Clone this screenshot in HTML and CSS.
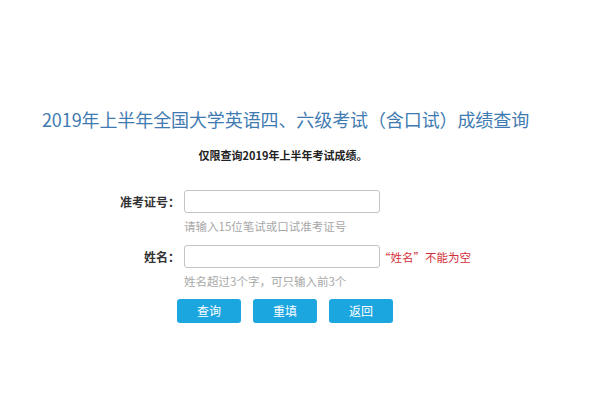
FILE: index.html
```html
<!DOCTYPE html>
<html lang="zh-CN">
<head>
<meta charset="utf-8">
<title>成绩查询</title>
<link rel="stylesheet" href="styles.css">
</head>
<body>
<div class="page">
  <h1 class="title">2019年上半年全国大学英语四、六级考试（含口试）成绩查询</h1>
  <p class="sub">仅限查询2019年上半年考试成绩。</p>
  <form class="form">
    <label class="lbl">准考证号：</label>
    <div class="field"><input class="inp" type="text"></div>
    <div></div>
    <div class="hint">请输入15位笔试或口试准考证号</div>
    <label class="lbl lbl2">姓名：</label>
    <div class="field field2"><input class="inp" type="text"><span class="err">“姓名”不能为空</span></div>
    <div></div>
    <div class="hint">姓名超过3个字，可只输入前3个</div>
  </form>
  <div class="btns">
    <button class="btn" type="button">查询</button>
    <button class="btn" type="button">重填</button>
    <button class="btn" type="button">返回</button>
  </div>
</div>
</body>
</html>
```
FILE: styles.css
```css
html, body {
  margin: 0;
  padding: 0;
  background: #ffffff;
}
body {
  font-family: "Noto Sans CJK SC", "Noto Sans", sans-serif;
  color: #333;
}
.page {
  width: 600px;
  height: 400px;
  overflow: hidden;
}
.title {
  margin: 107px 0 0 0;
  width: 571px;
  text-align: center;
  font-size: 18px;
  line-height: 24px;
  font-weight: normal;
  color: #3f7bb1;
  white-space: nowrap;
  letter-spacing: -0.1px;
}
.sub {
  margin: 16px 0 0 0;
  width: 566px;
  text-align: center;
  font-size: 11px;
  line-height: 16px;
  font-weight: bold;
  color: #222;
}
.form {
  margin: 27px 0 0 0;
  display: grid;
  grid-template-columns: 180px auto;
  column-gap: 4px;
  align-items: center;
}
.lbl {
  text-align: right;
  font-size: 12px;
  font-weight: bold;
  color: #333;
  line-height: 23px;
}
.lbl2 {
  margin-top: 11px;
}
.field {
  display: flex;
  align-items: center;
  gap: 0;
}
.field2 {
  margin-top: 11px;
}
.inp {
  box-sizing: border-box;
  width: 196px;
  height: 23px;
  margin: 0;
  border: 1px solid #c4c4c4;
  border-radius: 3px;
  background: #fff;
  padding: 0 4px;
  outline: none;
}
.err {
  font-size: 11.5px;
  color: #d2303a;
  line-height: 16px;
  white-space: nowrap;
  margin-left: -1px;
}
.hint {
  margin-top: 5px;
  font-size: 11.5px;
  line-height: 16px;
  color: #a8a8a8;
  white-space: nowrap;
}
.btns {
  margin-top: 10px;
  padding-left: 177px;
  display: flex;
  gap: 12px;
}
.btn {
  width: 64px;
  height: 24px;
  margin: 0;
  padding: 0;
  border: none;
  border-radius: 3px;
  background: #1ba6e0;
  color: #fff;
  font-family: "Noto Sans CJK SC", sans-serif;
  font-size: 12px;
  line-height: 24px;
}
```
